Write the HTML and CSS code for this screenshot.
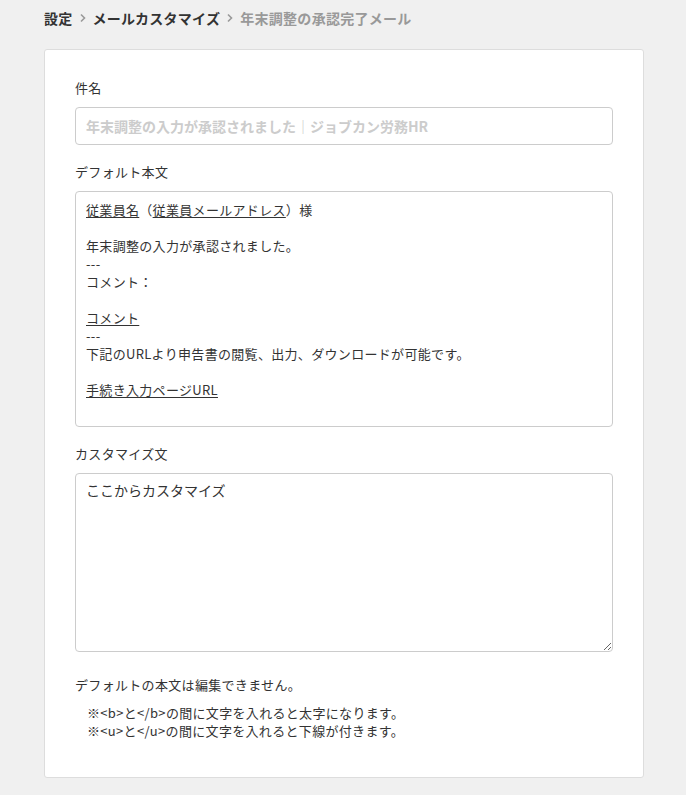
FILE: index.html
```html
<!DOCTYPE html>
<html lang="ja">
<head>
<meta charset="utf-8">
<title>年末調整の承認完了メール</title>
<link rel="stylesheet" href="styles.css">
</head>
<body>
<div class="page">
  <nav class="breadcrumb">
    <span class="crumb">設定</span>
    <svg class="chev" width="6" height="10" viewBox="0 0 6 10"><path d="M1 1.5 L4.5 5 L1 8.5" fill="none" stroke="#999" stroke-width="1.6"/></svg>
    <span class="crumb">メールカスタマイズ</span>
    <svg class="chev" width="6" height="10" viewBox="0 0 6 10"><path d="M1 1.5 L4.5 5 L1 8.5" fill="none" stroke="#999" stroke-width="1.6"/></svg>
    <span class="crumb current">年末調整の承認完了メール</span>
  </nav>

  <section class="card">
    <div class="field">
      <label class="label">件名</label>
      <input class="input" type="text" placeholder="年末調整の入力が承認されました｜ジョブカン労務HR">
    </div>

    <div class="field">
      <div class="label">デフォルト本文</div>
      <div class="default-body">
        <div class="line"><u>従業員名</u>（<u>従業員メールアドレス</u>）様</div>
        <div class="line">&nbsp;</div>
        <div class="line">年末調整の入力が承認されました。</div>
        <div class="line">---</div>
        <div class="line">コメント：</div>
        <div class="line">&nbsp;</div>
        <div class="line"><u>コメント</u></div>
        <div class="line">---</div>
        <div class="line">下記のURLより申告書の閲覧、出力、ダウンロードが可能です。</div>
        <div class="line">&nbsp;</div>
        <div class="line"><u>手続き入力ページURL</u></div>
      </div>
    </div>

    <div class="field">
      <label class="label">カスタマイズ文</label>
      <textarea class="textarea">ここからカスタマイズ</textarea>
    </div>

    <p class="note">デフォルトの本文は編集できません。</p>
    <ul class="hints">
      <li>※&lt;b&gt;と&lt;/b&gt;の間に文字を入れると太字になります。</li>
      <li>※&lt;u&gt;と&lt;/u&gt;の間に文字を入れると下線が付きます。</li>
    </ul>
  </section>
</div>
</body>
</html>
```

FILE: styles.css
```css
* { box-sizing: border-box; }

html, body {
  margin: 0;
  padding: 0;
  background: #f0f0f0;
  font-family: "Noto Sans CJK JP", "Noto Sans", sans-serif;
  color: #333;
}

.page {
  padding: 8px 43px 16px 44px;
}

.breadcrumb {
  display: flex;
  align-items: center;
  gap: 7px;
  font-size: 14px;
  font-weight: 700;
  line-height: 20px;
  letter-spacing: 0.02em;
  color: #333;
}

.chev { display: block; }

.crumb.current { color: #999; }

.card {
  margin-top: 21px;
  width: 600px;
  background: #fff;
  border: 1px solid #ddd;
  border-radius: 3px;
  padding: 29px 30px 37px;
  letter-spacing: 0.02em;
}

.field {
  display: flex;
  flex-direction: column;
  gap: 10px;
  margin-bottom: 18px;
}

.label {
  font-size: 13px;
  line-height: 18px;
  color: #333;
}

.input {
  width: 100%;
  height: 38px;
  border: 1px solid #ccc;
  border-radius: 4px;
  padding: 0 10px;
  font-family: inherit;
  font-size: 14px;
  font-weight: 700;
  letter-spacing: 0;
  color: #333;
  background: #fff;
  outline: none;
}

.input::placeholder { color: #ccc; font-weight: 700; }

.default-body {
  height: 236px;
  border: 1px solid #ccc;
  border-radius: 4px;
  padding: 9px 10px;
  font-size: 13px;
  line-height: 18px;
  color: #333;
}

.default-body u {
  text-underline-offset: 2px;
}

.textarea {
  display: block;
  width: 100%;
  height: 179px;
  border: 1px solid #ccc;
  border-radius: 4px;
  padding: 6px 10px;
  font-family: inherit;
  font-size: 14px;
  line-height: 20px;
  letter-spacing: 0;
  color: #333;
  resize: vertical;
  outline: none;
}

.note {
  margin: 24px 0 10px;
  font-size: 13px;
  line-height: 18px;
}

.hints {
  list-style: none;
  margin: 0;
  padding: 0 0 0 12px;
  font-size: 13px;
  line-height: 18px;
}
```
